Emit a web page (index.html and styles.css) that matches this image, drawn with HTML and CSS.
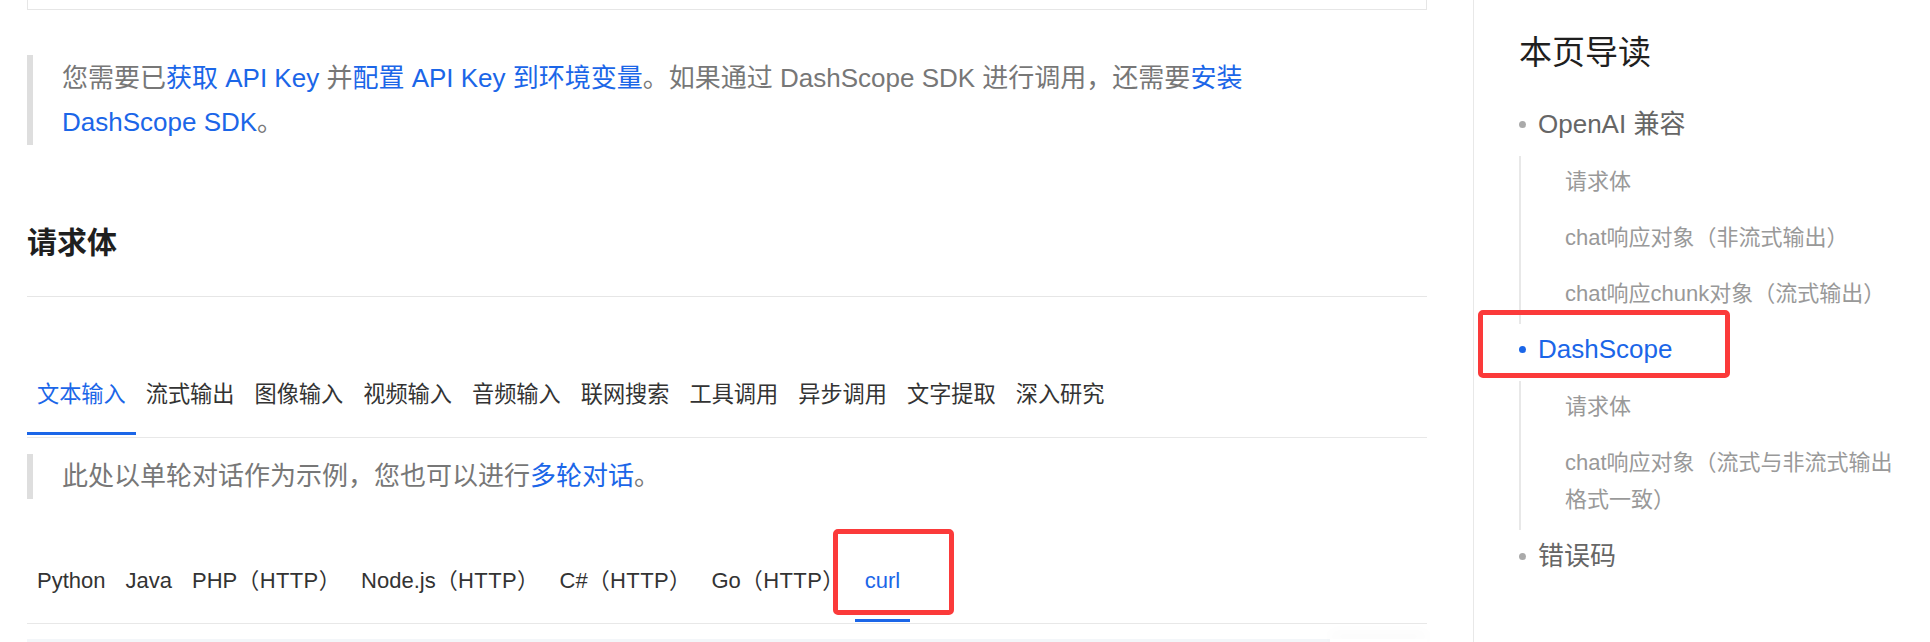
FILE: index.html
```html
<!DOCTYPE html>
<html lang="zh-CN">
<head>
<meta charset="utf-8">
<title>DashScope API</title>
<link rel="stylesheet" href="styles.css">
</head>
<body>
<div class="page">
  <main class="main">
    <div class="topbox"></div>

    <blockquote class="note note-first">
      您需要已<a href="#">获取 API Key</a> 并<a href="#">配置 API Key 到环境变量</a>。如果通过 DashScope SDK 进行调用，还需要<a href="#">安装 DashScope SDK</a>。
    </blockquote>

    <h2 class="section-title">请求体</h2>

    <div class="tabs">
      <span class="tab active">文本输入</span>
      <span class="tab">流式输出</span>
      <span class="tab">图像输入</span>
      <span class="tab">视频输入</span>
      <span class="tab">音频输入</span>
      <span class="tab">联网搜索</span>
      <span class="tab">工具调用</span>
      <span class="tab">异步调用</span>
      <span class="tab">文字提取</span>
      <span class="tab">深入研究</span>
    </div>

    <blockquote class="note note-second">
      此处以单轮对话作为示例，您也可以进行<a href="#">多轮对话</a>。
    </blockquote>

    <div class="code-tabs">
      <span class="code-tab">Python</span>
      <span class="code-tab">Java</span>
      <span class="code-tab">PHP<span class="suffix">（HTTP）</span></span>
      <span class="code-tab">Node.js<span class="suffix">（HTTP）</span></span>
      <span class="code-tab">C#<span class="suffix">（HTTP）</span></span>
      <span class="code-tab">Go<span class="suffix">（HTTP）</span></span>
      <span class="code-tab active">curl<span class="mark mark-curl"></span></span>
    </div>

    <div class="codeblock">
      <div class="code-toolbar"></div>
    </div>
  </main>

  <aside class="aside">
    <div class="aside-title">本页导读</div>
    <ul class="toc">
      <li>
        <div class="toc-row"><span class="dot"></span>OpenAI 兼容</div>
        <ul class="sub">
          <li>请求体</li>
          <li>chat响应对象（非流式输出）</li>
          <li>chat响应chunk对象（流式输出）</li>
        </ul>
      </li>
      <li>
        <div class="toc-row active"><span class="dot"></span>DashScope<span class="mark mark-toc"></span></div>
        <ul class="sub">
          <li>请求体</li>
          <li>chat响应对象（流式与非流式输出格式一致）</li>
        </ul>
      </li>
      <li class="toc-last">
        <div class="toc-row"><span class="dot"></span>错误码</div>
      </li>
    </ul>
  </aside>
</div>
</body>
</html>
```

FILE: styles.css
```css
html, body {
  margin: 0;
  padding: 0;
  overflow: hidden;
  background: #ffffff;
}

body {
  font-family: "Liberation Sans", "Noto Sans CJK SC", sans-serif;
  color: #333333;
}

a {
  color: #1b66e8;
  text-decoration: none;
}

.page {
  display: flex;
  align-items: stretch;
  height: 642px;
}

.main {
  width: 1400px;
  margin-left: 27px;
  flex: none;
}

.topbox {
  height: 9px;
  border: 1px solid #e6e6e6;
  border-top: 0;
}

.note {
  margin: 0;
  border-left: 6px solid #dedede;
  color: #777777;
  font-size: 26px;
  line-height: 44px;
  padding: 1px 60px 1px 29px;
}

.note-first {
  margin-top: 45px;
}

.note-second {
  margin-top: 16px;
  padding-top: 0;
  padding-bottom: 0;
  line-height: 45px;
}

.section-title {
  margin: 76px 0 0;
  font-size: 30px;
  font-weight: 700;
  line-height: 44px;
  color: #1f1f1f;
  padding-bottom: 31px;
  border-bottom: 1px solid #e6e6e6;
}

.tabs {
  display: flex;
  margin-top: 81px;
  padding-bottom: 2px;
  border-bottom: 1px solid #e8e8e8;
}

.tab {
  font-size: 22.2px;
  line-height: 34px;
  padding: 0 10px 20px;
  border-bottom: 3px solid transparent;
  color: #333333;
  white-space: nowrap;
}

.tab.active {
  color: #1b66e8;
  border-bottom-color: #1b66e8;
}

.code-tabs {
  display: flex;
  margin-top: 65px;
  padding-bottom: 1px;
  border-bottom: 1px solid #e8e8e8;
}

.code-tab {
  position: relative;
  font-size: 22px;
  line-height: 34px;
  padding: 0 10px 21px;
  border-bottom: 3px solid transparent;
  color: #333333;
  white-space: nowrap;
}

.code-tab .suffix {
  letter-spacing: 0.4px;
}

.code-tab.active {
  color: #1b66e8;
  border-bottom-color: #1b66e8;
}

.codeblock {
  position: relative;
  margin-top: 15px;
  height: 3px;
  background: #f3f6f9;
}

.code-toolbar {
  position: absolute;
  top: 0;
  right: 0;
  width: 97px;
  height: 3px;
  background: #ffffff;
  box-shadow: 0 -4px 14px rgba(0, 0, 0, 0.07);
}

.mark {
  position: absolute;
  box-sizing: border-box;
  border: 5px solid #fb3a3a;
  border-radius: 5px;
  pointer-events: none;
}

.mark-curl {
  left: -22px;
  top: -35px;
  width: 121px;
  height: 86px;
}

.mark-toc {
  left: -41px;
  top: -14px;
  width: 252px;
  height: 68px;
}

.aside {
  flex: 1;
  margin-left: 46px;
  border-left: 1px solid #e8e8e8;
  padding: 31px 25px 0 45px;
}

.aside-title {
  font-size: 33px;
  line-height: 44px;
  color: #1f1f1f;
}

.toc {
  list-style: none;
  margin: 24px 0 0;
  padding: 0;
}

.toc-row {
  position: relative;
  display: flex;
  align-items: center;
  font-size: 26px;
  line-height: 44px;
  padding: 3px 0 7px;
  color: #666666;
}

.toc-row.active {
  color: #1b66e8;
}

.dot {
  width: 7px;
  height: 7px;
  border-radius: 50%;
  background: #aaaaaa;
  margin-right: 12px;
  flex: none;
}

.toc-row.active .dot {
  background: #1b66e8;
}

.sub {
  list-style: none;
  margin: 3px 0 0;
  padding: 0 0 0 44px;
  border-left: 2px solid #e8e8e8;
}

.sub li {
  font-size: 22px;
  line-height: 37px;
  padding: 6.5px 0 12.5px;
  color: #999999;
}

.toc-last {
  margin-top: 1px;
}
```
